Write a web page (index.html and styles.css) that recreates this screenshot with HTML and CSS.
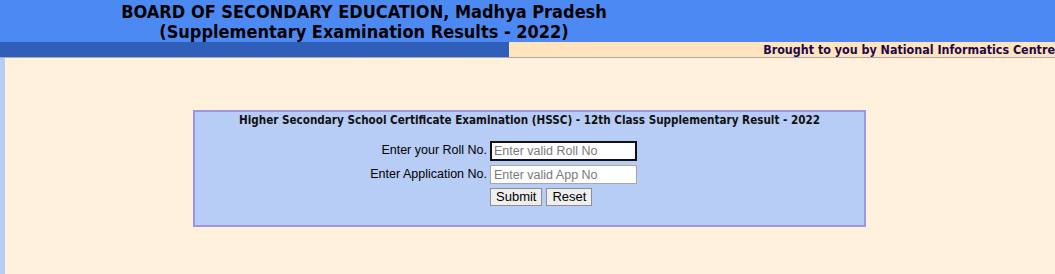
FILE: index.html
```html
<!DOCTYPE html>
<html>
<head>
<meta charset="utf-8">
<link rel="stylesheet" href="styles.css">
</head>
<body>
<div class="top">
  <div class="title">BOARD OF SECONDARY EDUCATION, Madhya Pradesh<br>(Supplementary Examination Results - 2022)</div>
</div>
<div class="strip">
  <div class="strip-left"></div>
  <div class="strip-right">Brought to you by National Informatics Centre</div>
</div>
<div class="main">
  <div class="box">
    <div class="box-title">Higher Secondary School Certificate Examination (HSSC) - 12th Class Supplementary Result - 2022</div>
    <form class="form">
      <label class="lbl">Enter your Roll No.</label>
      <input class="inp focus" type="text" placeholder="Enter valid Roll No">
      <label class="lbl">Enter Application No.</label>
      <input class="inp" type="text" placeholder="Enter valid App No">
      <span></span>
      <div class="btns"><button type="button" class="btn">Submit</button><button type="button" class="btn">Reset</button></div>
    </form>
  </div>
</div>
</body>
</html>
```
FILE: styles.css
```css
html, body { margin: 0; padding: 0; }
body { background: #fff1dc; height: 274px; overflow: hidden; }
.top { background: #4d89f2; height: 42px; }
.title {
  width: 728px; text-align: center;
  font-family: "DejaVu Sans Condensed", "DejaVu Sans", sans-serif;
  font-weight: bold; font-size: 18px; line-height: 20px;
  color: #000; padding-top: 2px;
}
.strip { display: flex; height: 15px; border-bottom: 1px solid #a9a9b5; }
.strip-left { width: 509px; background: #2f5fb9; }
.strip-right {
  flex: 1; background: #ffe4bd; text-align: right;
  font-family: "DejaVu Sans Condensed", "DejaVu Sans", sans-serif;
  font-weight: bold; font-size: 12.4px; line-height: 15px; color: #1a0a4a;
}
.main {
  border-left: 5px solid #b8cdf4; background: #fff1dc;
  padding-top: 52px; height: 220px; box-sizing: border-box;
}
.box {
  margin-left: 188px; width: 669px; height: 113px;
  background: #b7cdf5; border: 2px solid #9b97e6;
}
.box-title {
  text-align: center; padding-top: 1px;
  font-family: "DejaVu Sans Condensed", "DejaVu Sans", sans-serif;
  font-weight: bold; font-size: 11.6px; line-height: 15px; color: #111;
}
.form {
  display: grid; grid-template-columns: 292px 147px; column-gap: 3px; row-gap: 4px;
  margin-top: 13px;
  font-family: "Liberation Sans", Arial, sans-serif; font-size: 12.5px;
}
.lbl { text-align: right; line-height: 19px; color: #000; }
.inp {
  width: 147px; height: 19px; box-sizing: border-box; margin: 0;
  border: 1px solid #a7a7a7; background: #fff; padding: 0 3px;
  font-family: "Liberation Sans", Arial, sans-serif; font-size: 12.5px;
}
.inp::placeholder { color: #7a7a7a; }
.inp.focus { border: 2px solid #111; padding: 0 2px; height: 20px; }
.btns { display: flex; gap: 4px; }
.btn {
  height: 18px; margin: 0; padding: 0 5px; box-sizing: border-box;
  border: 1px solid #8f8f8f; background: #efefef; border-radius: 0;
  font-family: "Liberation Sans", Arial, sans-serif; font-size: 13px; line-height: 16px; color: #000;
}
```
